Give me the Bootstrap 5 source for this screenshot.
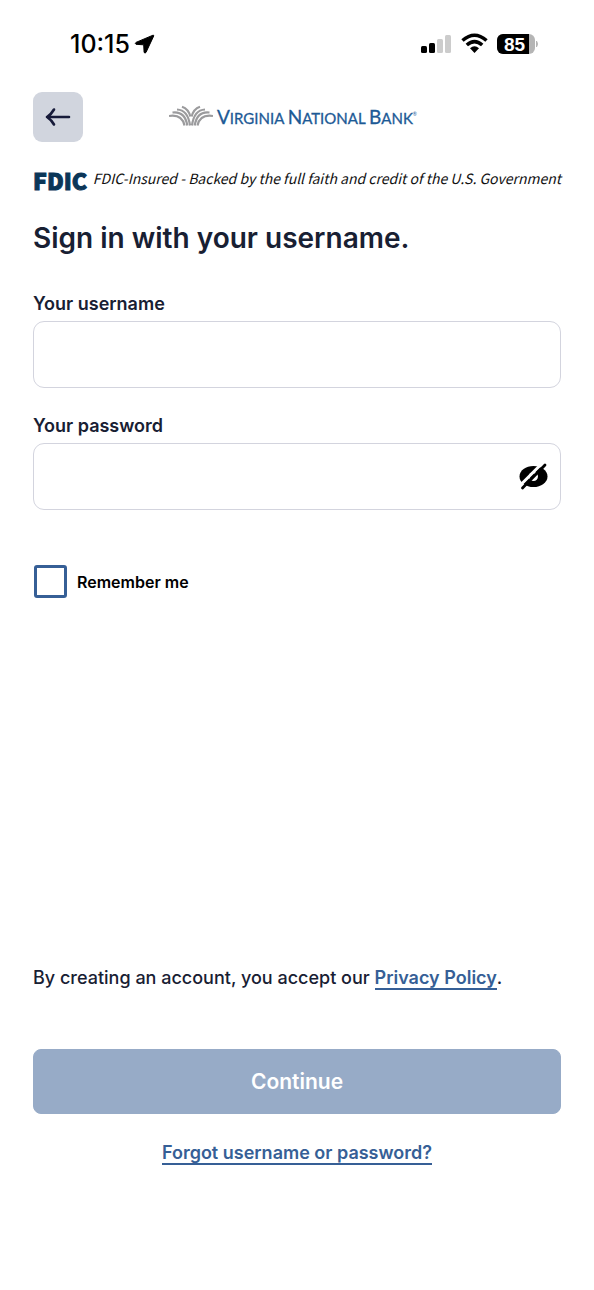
<!DOCTYPE html>
<html lang="en">
<head>
<meta charset="utf-8">
<meta name="viewport" content="width=device-width, initial-scale=1">
<title>Sign in - Virginia National Bank</title>
<link rel="stylesheet" href="https://cdn.jsdelivr.net/npm/bootstrap@5.3.0/dist/css/bootstrap.min.css">
<style>
  :root { --ink: #182033; --brand: #365f96; --line: #d3d4de; }
  body { font-family: Inter, "Liberation Sans", sans-serif; color: var(--ink); background: #fff; }
  .screen { padding: 0 33px 123px; }
  .status-bar { height: 92px; padding: 30px 22px 0 37px; color: #000; }
  .clock { font-size: 25px; line-height: 28px; font-weight: 500; }
  .status-icons { gap: 9px; }
  .battery-level { font: 700 19px/20px "Liberation Sans", sans-serif; }
  .top-bar { display: grid; grid-template-columns: 50px 1fr 58px; align-items: center; }
  .back-btn { width: 50px; height: 50px; border-radius: 9px; background: #d1d5de; }
  .brand-logo { padding-bottom: 3px; }
  .wordmark { font: 400 15px/24px Lato, sans-serif; color: #1d5a96; -webkit-text-stroke: 0.3px #1d5a96; }
  .wordmark .cap { font-size: 19px; }
  .wordmark .reg { font-size: 5px; vertical-align: 8px; -webkit-text-stroke: 0; }
  .fdic { margin-top: 24px; color: #111; }
  .fdic-logo { font: 900 23px/28px "Noto Sans CJK SC", sans-serif; color: #0b3658; -webkit-text-stroke: 1px #0b3658; }
  .fdic-text { font: italic 400 14px/24px "Noto Sans CJK SC", sans-serif; }
  .title { font-size: 28px; line-height: 40px; font-weight: 600; margin: 24px 0 34px; }
  .field-label { font-size: 18px; line-height: 24px; font-weight: 600; margin-bottom: 5px; }
  .field-box { height: 67px; border: 1px solid var(--line); border-radius: 11px; }
  .field + .field { margin-top: 26px; }
  .eye-btn { right: 13px; top: 0; height: 67px; }
  .remember { margin-top: 55px; padding-left: 1px; gap: 10px; }
  .remember .tick { width: 33px; height: 33px; border: 3px solid var(--brand); border-radius: 3px; }
  .remember-label { font-size: 16px; font-weight: 600; color: #000; }
  .terms { font-size: 18px; line-height: 28px; font-weight: 500; margin-bottom: 57px; }
  .inline-link { color: var(--brand); font-weight: 600; text-decoration: none; border-bottom: 2px solid var(--brand); }
  .continue-btn { --bs-btn-disabled-bg: #97abc7; --bs-btn-disabled-color: #fff; --bs-btn-disabled-border-color: #97abc7; --bs-btn-disabled-opacity: 1; height: 65px; border-radius: 8px; font-size: 21px; font-weight: 600; }
  .forgot { font-size: 18px; line-height: 28px; margin-top: 25px; }
</style>
</head>
<body>
<div class="screen d-flex flex-column min-vh-100">
  <div class="status-bar d-flex justify-content-between align-items-start">
    <div class="d-flex align-items-center gap-1">
      <span class="clock">10:15</span>
      <svg width="21" height="20" viewBox="0 0 21 20" aria-hidden="true"><path d="M19 1.200 2 8.400Q.6 9.400 2 10.300l7.700.5.4 7.600q.9 1.400 1.900 0L19.700 2Q20 1 19 1.200Z" fill="#000" stroke="#000" stroke-linejoin="round"/></svg>
    </div>
    <div class="status-icons d-flex align-items-center">
      <svg width="31" height="28" viewBox="0 0 31 28" aria-label="Signal"><rect x="0" y="16" width="6" height="7" rx="1.500"/><rect x="8" y="13" width="6" height="10" rx="1.500"/><g fill="#ccc"><rect x="16" y="9" width="6" height="14" rx="1.500"/><rect x="24" y="5" width="6" height="18" rx="1.500"/></g></svg>
      <svg width="27" height="28" viewBox="0 0 27 28" aria-label="Wi-Fi"><g fill="none" stroke="#000" stroke-width="3.600"><path d="M1.500 10.500Q13.500 0 25.500 10.500"/><path d="M5.800 15Q13.500 8.300 21.200 15"/></g><path d="M9 18.200q4.500-3.800 9 0L13.500 23Z"/></svg>
      <svg width="42" height="28" viewBox="0 0 42 28" aria-label="Battery"><defs><clipPath id="cell"><rect y="4" width="38" height="20" rx="6"/></clipPath></defs><g clip-path="url(#cell)"><path fill="#b5b5b5" d="M0 4h38v20H0z"/><path d="M0 4h32v20H0z"/></g><path d="M39.500 11q2 3 0 6Z" fill="#b5b5b5" stroke="#b5b5b5"/><text class="battery-level" x="7" y="21" fill="#fff">85</text></svg>
    </div>
  </div>

  <header class="top-bar">
    <button type="button" class="back-btn btn border-0 p-0 d-flex align-items-center justify-content-center" aria-label="Back">
      <svg width="26" height="20" viewBox="0 0 26 20" fill="none" stroke="#171b3a" stroke-width="2.600" stroke-linecap="round" stroke-linejoin="round"><path d="M24 10H2M9 2.500Q6.500 7 2 10q4.500 3 7 7.500"/></svg>
    </button>
    <div class="brand-logo d-flex align-items-center justify-content-center gap-1">
      <svg width="44" height="22" viewBox="0 0 44 22" fill="none" stroke="#9b9b9d" stroke-width="2.200" aria-hidden="true"><g id="fronds"><path d="M0 11Q13 9 15.500 20.500"/><path d="M3.500 7.500Q16 6 18.300 20.500"/><path d="M8 4.500Q19 5 21 20.500"/><path d="M13 1.800Q19.500 4 21.300 11.500"/></g><use href="#fronds" transform="matrix(-1 0 0 1 44 0)"/></svg>
      <div class="wordmark text-nowrap"><span class="cap">V</span>IRGINIA <span class="cap">N</span>ATIONAL <span class="cap">B</span>ANK<span class="reg">®</span></div>
    </div>
  </header>

  <div class="fdic d-flex align-items-start justify-content-between text-nowrap">
    <span class="fdic-logo">FDIC</span>
    <span class="fdic-text">FDIC-Insured - Backed by the full faith and credit of the U.S. Government</span>
  </div>

  <form class="d-flex flex-column flex-grow-1">
    <h1 class="title">Sign in with your username.</h1>
    <div class="field">
      <label class="field-label d-block" for="username">Your username</label>
      <input class="field-box form-control" id="username" type="text" autocomplete="username">
    </div>
    <div class="field">
      <label class="field-label d-block" for="password">Your password</label>
      <div class="position-relative">
        <input class="field-box form-control pe-5" id="password" type="password" autocomplete="current-password">
        <button type="button" class="eye-btn btn border-0 p-0 position-absolute d-flex align-items-center" aria-label="Show password">
          <svg width="29" height="27" viewBox="0 0 29 27" aria-hidden="true"><ellipse cx="14.500" cy="13.500" rx="14" ry="10.500"/><circle cx="14.500" cy="13.500" r="4.500" fill="#fff"/><path d="M15 10.500q-1 3-4 4" stroke="#000" stroke-width="3" fill="none"/><path d="M1.500 22 23.500 0" stroke="#fff" stroke-width="3"/><path d="M3.500 25 26 2" stroke="#000" stroke-width="2.800" stroke-linecap="round"/></svg>
        </button>
      </div>
    </div>
    <div class="remember d-flex align-items-center">
      <input class="tick form-check-input m-0" type="checkbox" id="remember">
      <label class="remember-label" for="remember">Remember me</label>
    </div>

    <div class="mt-auto">
      <p class="terms">By creating an account, you accept our <a class="inline-link" href="#privacy">Privacy Policy</a>.</p>
      <button type="submit" class="continue-btn btn w-100" disabled>Continue</button>
      <div class="forgot text-center"><a class="inline-link" href="#forgot">Forgot username or password?</a></div>
    </div>
  </form>
</div>
<script src="https://cdn.jsdelivr.net/npm/bootstrap@5.3.0/dist/js/bootstrap.bundle.min.js"></script>
</body>
</html>
